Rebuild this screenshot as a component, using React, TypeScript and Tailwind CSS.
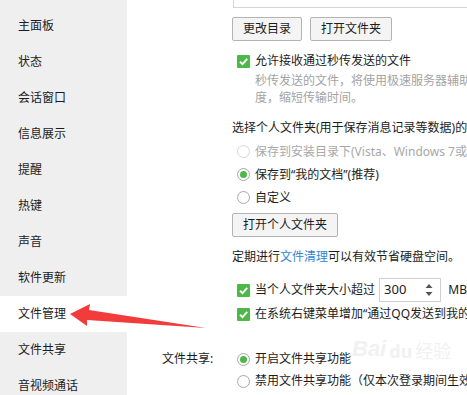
const MENU = [
  "主面板",
  "状态",
  "会话窗口",
  "信息展示",
  "提醒",
  "热键",
  "声音",
  "软件更新",
  "文件管理",
  "文件共享",
  "音视频通话",
];

function CheckBox() {
  return (
    <span className="flex h-[13px] w-[13px] shrink-0 items-center justify-center rounded-[1px] bg-[#4cb848]">
      <svg width="11" height="11" viewBox="0 0 11 11">
        <path d="M2 5.8 L4.5 8.2 L9.2 2.8" fill="none" stroke="#fff" strokeWidth="1.9" />
      </svg>
    </span>
  );
}

function Radio({ checked, disabled }: { checked?: boolean; disabled?: boolean }) {
  return (
    <span
      className={`flex h-[13px] w-[13px] shrink-0 items-center justify-center rounded-full border bg-white ${
        disabled ? "border-[#d6d6d6]" : "border-[#a8a8a8]"
      }`}
    >
      {checked && <span className="h-[7px] w-[7px] rounded-full bg-[#4cb848]" />}
    </span>
  );
}

function Btn({ children }: { children: React.ReactNode }) {
  return (
    <div className="flex h-[24px] items-center rounded-[2px] border border-[#b4b4b4] bg-[#f4f4f4] px-[10px] leading-none">
      {children}
    </div>
  );
}

export default function App() {
  return (
    <div
      className="relative flex h-[395px] w-[467px] overflow-hidden bg-white text-[12px] text-[#1c1c1c]"
      style={{ fontFamily: '"Noto Sans", "Noto Sans CJK SC", sans-serif' }}
    >
      <aside className="w-[127px] shrink-0 bg-[#efefef] pt-[8px]">
        {MENU.map((m) => (
          <div
            key={m}
            className={`flex h-[36px] items-center pl-[18px] ${m === "文件管理" ? "bg-white" : ""}`}
          >
            {m}
          </div>
        ))}
      </aside>

      <main className="flex min-w-0 flex-1 flex-col whitespace-nowrap pl-[35px]">
        <div className="ml-[71px] h-[8px] w-[300px] shrink-0 border-x border-b border-[#d6d6d6]" />

        <div className="ml-[70px] mt-[9px] flex gap-[8px]">
          <Btn>更改目录</Btn>
          <Btn>打开文件夹</Btn>
        </div>

        <div className="ml-[75px] mt-[11px] flex h-[18px] items-center gap-[5px]">
          <CheckBox />
          <span>允许接收通过秒传发送的文件</span>
        </div>
        <div className="ml-[93px] mt-[2px] leading-[17px] text-[#a3a3a3]">
          <div>秒传发送的文件，将使用极速服务器辅助</div>
          <div>度，缩短传输时间。</div>
        </div>

        <div className="ml-[70px] mt-[13px] h-[18px] leading-[18px]">
          选择个人文件夹(用于保存消息记录等数据)的位置：
        </div>
        <div className="ml-[75px] mt-[3px] flex flex-col">
          <div className="flex h-[23px] items-center gap-[5px] text-[#a8a8a8]">
            <Radio disabled />
            <span>保存到安装目录下(Vista、Windows 7或更高版本)</span>
          </div>
          <div className="flex h-[23px] items-center gap-[5px]">
            <Radio checked />
            <span>保存到“我的文档”(推荐)</span>
          </div>
          <div className="flex h-[23px] items-center gap-[5px]">
            <Radio />
            <span>自定义</span>
          </div>
        </div>

        <div className="ml-[70px] mt-[4px] flex">
          <Btn>打开个人文件夹</Btn>
        </div>

        <div className="ml-[70px] mt-[11px] h-[18px] leading-[18px]">
          定期进行<span className="text-[#2f86d6]">文件清理</span>可以有效节省硬盘空间。
        </div>

        <div className="ml-[75px] mt-[12px] flex h-[24px] items-center gap-[5px]">
          <CheckBox />
          <span>当个人文件夹大小超过</span>
          <div className="ml-[-1px] flex h-[24px] w-[65px] items-center justify-between border border-[#cfcfcf] pl-[4px] pr-[7px]">
            <span className="text-[13px]">300</span>
            <svg width="8" height="16" viewBox="0 0 8 16">
              <path d="M4 2 L7.5 6 L0.5 6 Z" fill="#555" />
              <path d="M4 14 L7.5 10 L0.5 10 Z" fill="#555" />
            </svg>
          </div>
          <span className="ml-[2px]">MB</span>
        </div>
        <div className="ml-[75px] mt-[3px] flex h-[18px] items-center gap-[5px]">
          <CheckBox />
          <span>在系统右键菜单增加“通过QQ发送到我的手机”</span>
        </div>

        <div className="mt-[26px] flex">
          <div className="w-[70px] shrink-0 pt-[1px] leading-[18px]">文件共享:</div>
          <div className="ml-[5px] flex flex-col">
            <div className="flex h-[20px] items-center gap-[5px]">
              <Radio checked />
              <span>开启文件共享功能</span>
            </div>
            <div className="flex h-[24px] items-center gap-[5px]">
              <Radio />
              <span>禁用文件共享功能（仅本次登录期间生效）</span>
            </div>
          </div>
        </div>
      </main>

      <div className="pointer-events-none absolute left-[352px] top-[338px] flex items-end gap-[3px] text-[#f1f1f1]">
        <span className="text-[22px] font-bold italic leading-none" style={{ fontFamily: '"Liberation Sans", sans-serif' }}>
          Bai
        </span>
        <span className="text-[18px] font-bold leading-none">du</span>
        <span className="text-[18px] leading-none">经验</span>
      </div>

      <svg className="pointer-events-none absolute left-0 top-0" width="467" height="395">
        <polygon
          points="70,314 90,304 89,310 206,328 87,320 87,326"
          fill="#f23c3c"
        />
      </svg>
    </div>
  );
}
